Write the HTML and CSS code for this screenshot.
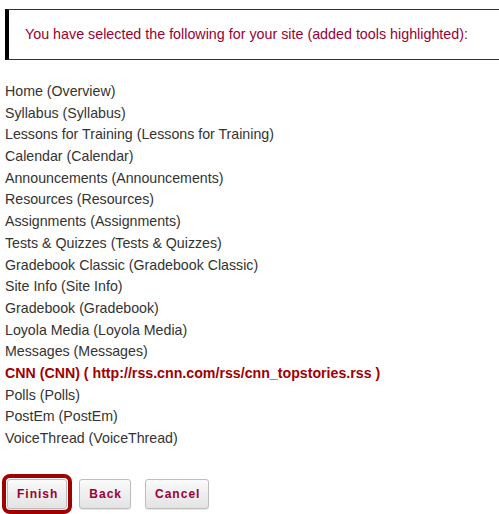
FILE: index.html
```html
<!DOCTYPE html>
<html>
<head>
<meta charset="utf-8">
<link rel="stylesheet" href="styles.css">
</head>
<body>
<div class="page">
  <div class="notice">You have selected the following for your site (added tools highlighted):</div>
  <ul class="tools">
    <li>Home (Overview)</li>
    <li>Syllabus (Syllabus)</li>
    <li>Lessons for Training (Lessons for Training)</li>
    <li>Calendar (Calendar)</li>
    <li>Announcements (Announcements)</li>
    <li>Resources (Resources)</li>
    <li>Assignments (Assignments)</li>
    <li>Tests &amp; Quizzes (Tests &amp; Quizzes)</li>
    <li>Gradebook Classic (Gradebook Classic)</li>
    <li>Site Info (Site Info)</li>
    <li>Gradebook (Gradebook)</li>
    <li>Loyola Media (Loyola Media)</li>
    <li>Messages (Messages)</li>
    <li class="added">CNN (CNN) ( http://rss.cnn.com/rss/cnn_topstories.rss )</li>
    <li>Polls (Polls)</li>
    <li>PostEm (PostEm)</li>
    <li>VoiceThread (VoiceThread)</li>
  </ul>
  <div class="actions">
    <span class="ring"><button class="btn">Finish</button></span>
    <button class="btn">Back</button>
    <button class="btn cancel">Cancel</button>
  </div>
</div>
</body>
</html>
```

FILE: styles.css
```css
html, body {
  margin: 0;
  padding: 0;
  background: #fff;
}
body {
  font-family: "Liberation Sans", Arial, sans-serif;
  font-size: 14.2px;
  color: #333;
  overflow: hidden;
}
.page {
  padding: 9px 0 0 5px;
}
.notice {
  border-top: 1px solid #333;
  border-bottom: 1px solid #333;
  border-left: 4px solid #000;
  color: #990033;
  font-size: 14.3px;
  height: 49px;
  line-height: 49px;
  padding-left: 16px;
  white-space: nowrap;
}
.tools {
  list-style: none;
  margin: 0;
  padding: 21px 0 0 0;
}
.tools li {
  line-height: 21.7px;
  height: 21.7px;
  white-space: nowrap;
}
.tools li.added {
  color: #a00000;
  font-weight: bold;
}
.actions {
  display: flex;
  align-items: center;
  gap: 7px;
  margin-top: 24px;
  margin-left: -3px;
}
.ring {
  display: inline-flex;
  border: 4px solid #a00000;
  border-radius: 8px;
  padding: 1px;
}
.btn {
  font-family: "Liberation Sans", Arial, sans-serif;
  font-size: 12px;
  font-weight: bold;
  letter-spacing: 1px;
  color: #990033;
  background: linear-gradient(#fafafa, #e3e3e3);
  border: 1px solid #bdbdbd;
  border-radius: 3px;
  height: 30px;
  padding: 0 8px 0 9px;
  margin: 0;
  box-shadow: 0 1px 1px rgba(0,0,0,0.1);
}
.btn.cancel {
  margin-left: 7px;
}
```
